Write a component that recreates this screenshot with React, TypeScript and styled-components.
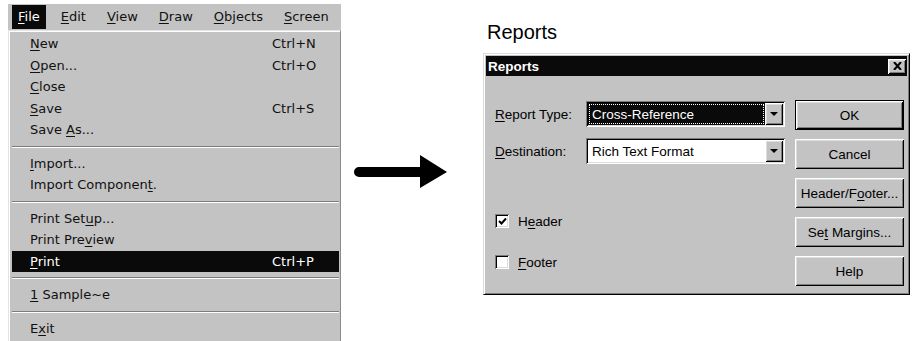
import styled, { createGlobalStyle } from "styled-components";

const GlobalStyle = createGlobalStyle`
  html, body {
    margin: 0;
    padding: 0;
    background: #ffffff;
  }
`;

const GRAY = "#c3c3c3";

type MenuEntry = { label: string; shortcut?: string; active?: boolean };

const barItems = ["&File", "&Edit", "&View", "&Draw", "&Objects", "&Screen"];

const menuGroups: MenuEntry[][] = [
  [
    { label: "&New", shortcut: "Ctrl+N" },
    { label: "&Open...", shortcut: "Ctrl+O" },
    { label: "&Close" },
    { label: "&Save", shortcut: "Ctrl+S" },
    { label: "Save &As..." },
  ],
  [{ label: "&Import..." }, { label: "Import Componen&t." }],
  [
    { label: "Print Set&up..." },
    { label: "Print Pre&view" },
    { label: "&Print", shortcut: "Ctrl+P", active: true },
  ],
  [{ label: "&1 Sample~e" }],
  [{ label: "E&xit" }],
];

const dialogButtons = [
  { label: "OK", isDefault: true },
  { label: "Cancel" },
  { label: "Header/F&ooter..." },
  { label: "Se&t Margins..." },
  { label: "Help" },
];

// renders "&X" as an underlined access key, wrapped in one span
const Mnemonic = ({ text }: { text: string }) => {
  const i = text.indexOf("&");
  if (i < 0) return <span>{text}</span>;
  return (
    <span>
      {text.slice(0, i)}
      <AccessKey>{text[i + 1]}</AccessKey>
      {text.slice(i + 2)}
    </span>
  );
};

const App = () => {
  return (
    <Page>
      <GlobalStyle />
      <MenuArea>
        <MenuBar>
          {barItems.map((item, i) => (
            <BarItem key={item} $active={i === 0}>
              <Mnemonic text={item} />
            </BarItem>
          ))}
        </MenuBar>
        <Dropdown>
          {menuGroups.map((group, gi) => (
            <MenuGroup key={gi}>
              {gi > 0 && <Separator />}
              {group.map((entry) => (
                <MenuItem key={entry.label} $active={entry.active}>
                  <Mnemonic text={entry.label} />
                  <span>{entry.shortcut}</span>
                </MenuItem>
              ))}
            </MenuGroup>
          ))}
        </Dropdown>
      </MenuArea>

      <ArrowArea>
        <svg width="96" height="36" viewBox="0 0 96 36">
          <path d="M7 13 H70 V23 H7 A5 5 0 0 1 7 13 Z" fill="#000" />
          <polygon points="68,1 95,18 68,34" fill="#000" />
        </svg>
      </ArrowArea>

      <DialogArea>
        <Caption>Reports</Caption>
        <Dialog>
          <TitleBar>
            <TitleText>Reports</TitleText>
            <CloseButton>
              <svg width="9" height="8" viewBox="0 0 9 8">
                <path d="M1 0 L8 8 M8 0 L1 8" stroke="#000" strokeWidth="2" />
              </svg>
            </CloseButton>
          </TitleBar>
          <DialogBody>
            <Fields>
              <FieldRow $top={25}>
                <Mnemonic text="&Report Type:" />
                <Combo>
                  <ComboValue $selected>
                    <FocusText>Cross-Reference</FocusText>
                  </ComboValue>
                  <DropButton>
                    <DownTriangle />
                  </DropButton>
                </Combo>
              </FieldRow>
              <FieldRow $top={11}>
                <Mnemonic text="&Destination:" />
                <Combo>
                  <ComboValue>Rich Text Format</ComboValue>
                  <DropButton>
                    <DownTriangle />
                  </DropButton>
                </Combo>
              </FieldRow>
              <CheckRow $top={47}>
                <CheckBox>
                  <svg width="9" height="9" viewBox="0 0 9 9">
                    <path d="M1 4 L3.5 6.5 L8 1.5" stroke="#000" strokeWidth="2" fill="none" />
                  </svg>
                </CheckBox>
                <Mnemonic text="H&eader" />
              </CheckRow>
              <CheckRow $top={21}>
                <CheckBox />
                <Mnemonic text="&Footer" />
              </CheckRow>
            </Fields>
            <ButtonColumn>
              {dialogButtons.map((b) => (
                <PushButton key={b.label} $default={b.isDefault}>
                  <Mnemonic text={b.label} />
                </PushButton>
              ))}
            </ButtonColumn>
          </DialogBody>
        </Dialog>
      </DialogArea>
    </Page>
  );
};

const Page = styled.div`
  display: flex;
  align-items: flex-start;
  width: 912px;
  height: 341px;
  overflow: hidden;
  padding: 4px 0 0 8px;
  box-sizing: border-box;
  background: #ffffff;
`;

const AccessKey = styled.span`
  text-decoration: underline;
  text-underline-offset: 2px;
`;

/* ---- menu ---- */

const MenuArea = styled.div`
  width: 333px;
  flex-shrink: 0;
  font-family: "DejaVu Sans", sans-serif;
  font-size: 13px;
  color: #111;
`;

const MenuBar = styled.div`
  display: flex;
  gap: 9px;
  height: 26px;
  padding: 1px 0 0 4px;
  box-sizing: border-box;
  background: ${GRAY};
`;

const BarItem = styled.div<{ $active?: boolean }>`
  height: 24px;
  line-height: 24px;
  padding: 0 6px;
  ${({ $active }) => $active && `background: #0a0a0a; color: #fff;`}
`;

const Dropdown = styled.div`
  background: ${GRAY};
  border: 1px solid;
  border-color: #e4e4e4 #8a8a8a #8a8a8a #e4e4e4;
  box-shadow: inset 1px 1px #ffffff;
  padding: 2px 1px 6px 3px;
`;

const MenuGroup = styled.div``;

const MenuItem = styled.div<{ $active?: boolean }>`
  display: grid;
  grid-template-columns: 242px auto;
  height: 21.5px;
  line-height: 21.5px;
  padding-left: 18px;
  white-space: nowrap;
  ${({ $active }) => $active && `background: #0a0a0a; color: #fff;`}
`;

const Separator = styled.div`
  height: 12px;
  display: flex;
  align-items: center;

  &::before {
    content: "";
    flex: 1;
    border-top: 1px solid #7c7c7c;
    border-bottom: 1px solid #ffffff;
  }
`;

/* ---- arrow ---- */

const ArrowArea = styled.div`
  width: 96px;
  height: 36px;
  margin: 150px 0 0 11px;
  flex-shrink: 0;

  svg {
    display: block;
  }
`;

/* ---- dialog ---- */

const DialogArea = styled.div`
  margin: 17px 0 0 35px;
  font-family: "Liberation Sans", Arial, sans-serif;
  color: #000;
`;

const Caption = styled.div`
  font-size: 20px;
  line-height: 23px;
  padding-left: 4px;
`;

const Dialog = styled.div`
  width: 427px;
  height: 242px;
  margin-top: 9px;
  box-sizing: border-box;
  background: ${GRAY};
  border: 1px solid;
  border-color: #dcdcdc #000 #000 #dcdcdc;
  box-shadow: inset 1px 1px #ffffff, inset -1px -1px #7c7c7c;
  padding: 2px;
  display: flex;
  flex-direction: column;
`;

const TitleBar = styled.div`
  height: 20px;
  background: #0a0a0a;
  display: flex;
  align-items: center;
  justify-content: space-between;
  padding: 0 1px 0 2px;
`;

const TitleText = styled.span`
  color: #fff;
  font-weight: bold;
  font-size: 13.5px;
`;

const raised = `
  background: ${GRAY};
  box-shadow: inset 1px 1px #ffffff, inset -1px -1px #000000,
    inset 2px 2px #dcdcdc, inset -2px -2px #7c7c7c;
`;

const CloseButton = styled.div`
  width: 18px;
  height: 15px;
  ${raised}
  display: flex;
  align-items: center;
  justify-content: center;
`;

const DialogBody = styled.div`
  flex: 1;
  display: flex;
  gap: 10px;
  padding: 0 3px 0 9px;
  font-size: 13.5px;
`;

const Fields = styled.div`
  width: 290px;
  display: flex;
  flex-direction: column;
`;

const FieldRow = styled.div<{ $top: number }>`
  display: grid;
  grid-template-columns: 91px 199px;
  align-items: center;
  height: 26px;
  margin-top: ${({ $top }) => $top}px;
`;

const Combo = styled.div`
  height: 26px;
  box-sizing: border-box;
  display: flex;
  padding: 2px;
  background: #ffffff;
  box-shadow: inset 1px 1px #7c7c7c, inset -1px -1px #ffffff,
    inset 2px 2px #000000, inset -2px -2px #dcdcdc;
`;

const ComboValue = styled.div<{ $selected?: boolean }>`
  flex: 1;
  display: flex;
  align-items: center;
  padding-left: 4px;
  white-space: nowrap;
  ${({ $selected }) =>
    $selected &&
    `
    background: #0a0a0a;
    color: #fff;
    padding: 1px;
  `}
`;

const FocusText = styled.span`
  flex: 1;
  align-self: stretch;
  display: flex;
  align-items: center;
  padding-left: 3px;
  outline: 1px dotted #ffffff;
  outline-offset: -1px;
`;

const DropButton = styled.div`
  width: 18px;
  ${raised}
  display: flex;
  align-items: center;
  justify-content: center;
`;

const DownTriangle = styled.span`
  width: 0;
  height: 0;
  border-left: 4px solid transparent;
  border-right: 4px solid transparent;
  border-top: 4px solid #000;
`;

const CheckRow = styled.div<{ $top: number }>`
  display: flex;
  align-items: center;
  gap: 9px;
  height: 20px;
  margin-top: ${({ $top }) => $top}px;
`;

const CheckBox = styled.div`
  width: 14px;
  height: 14px;
  box-sizing: border-box;
  background: #ffffff;
  box-shadow: inset 1px 1px #7c7c7c, inset -1px -1px #ffffff,
    inset 2px 2px #000000, inset -2px -2px #dcdcdc;
  display: flex;
  align-items: center;
  justify-content: center;

  svg {
    display: block;
  }
`;

const ButtonColumn = styled.div`
  width: 109px;
  display: flex;
  flex-direction: column;
  gap: 9px;
  padding-top: 24px;
`;

const PushButton = styled.div<{ $default?: boolean }>`
  height: 30px;
  box-sizing: border-box;
  ${raised}
  display: flex;
  align-items: center;
  justify-content: center;
  ${({ $default }) => $default && `border: 1px solid #000;`}
`;

export default App;
